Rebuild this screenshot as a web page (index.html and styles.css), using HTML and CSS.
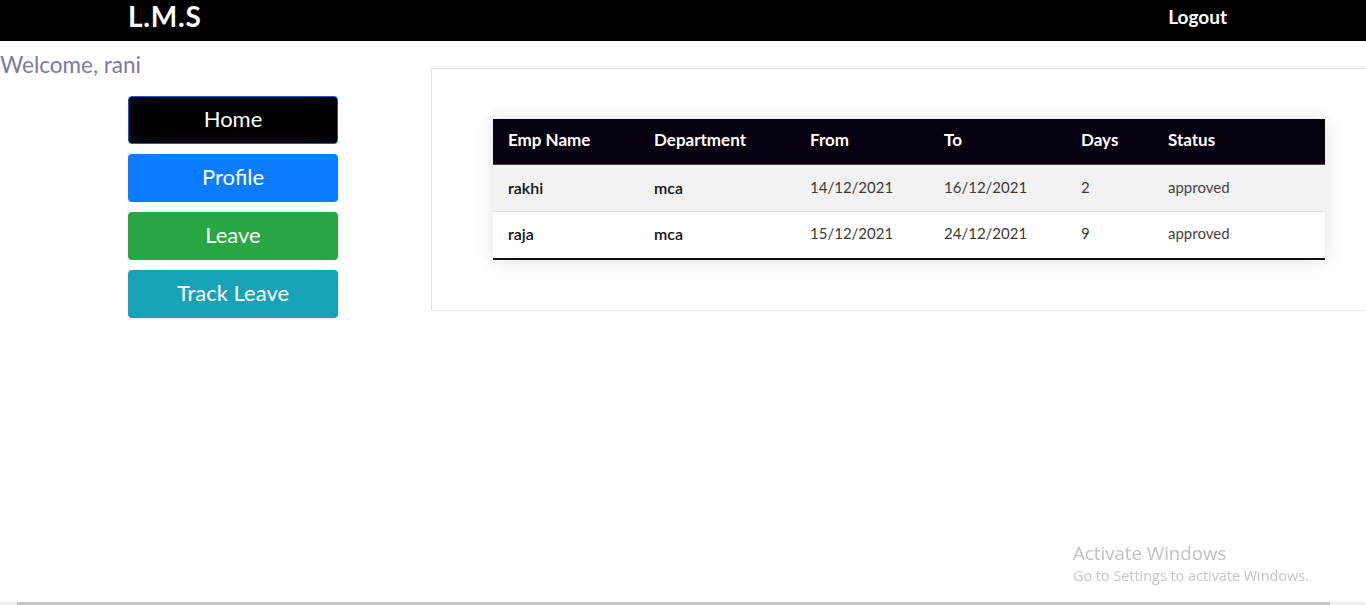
FILE: index.html
```html
<!DOCTYPE html>
<html lang="en">
<head>
<meta charset="utf-8">
<title>L.M.S</title>
<link rel="stylesheet" href="styles.css">
</head>
<body>
<header class="topbar">
  <div class="brand">L.M.S</div>
  <a class="logout" href="#">Logout</a>
</header>
<div class="layout">
  <aside class="side">
    <div class="welcome">Welcome, rani</div>
    <nav class="menu">
      <a class="btn btn-home" href="#">Home</a>
      <a class="btn btn-profile" href="#">Profile</a>
      <a class="btn btn-leave" href="#">Leave</a>
      <a class="btn btn-track" href="#">Track Leave</a>
    </nav>
  </aside>
  <main class="panel">
    <table class="leaves">
      <thead>
        <tr><th>Emp Name</th><th>Department</th><th>From</th><th>To</th><th>Days</th><th>Status</th></tr>
      </thead>
      <tbody>
        <tr class="alt"><td class="strong">rakhi</td><td class="strong">mca</td><td>14/12/2021</td><td>16/12/2021</td><td>2</td><td class="light">approved</td></tr>
        <tr class="last"><td class="strong">raja</td><td class="strong">mca</td><td>15/12/2021</td><td>24/12/2021</td><td>9</td><td class="light">approved</td></tr>
      </tbody>
    </table>
  </main>
</div>
<div class="watermark">
  <div class="wm-title">Activate Windows</div>
  <div class="wm-sub">Go to Settings to activate Windows.</div>
</div>
<div class="hscroll"><div class="thumb"></div></div>
</body>
</html>
```
FILE: styles.css
```css
html, body {
  margin: 0;
  padding: 0;
  overflow: hidden;
  height: 605px;
  background: #fff;
  font-family: Lato, "Open Sans", sans-serif;
}
.topbar {
  height: 41px;
  background: #000;
  display: flex;
  align-items: center;
  justify-content: space-between;
  padding: 0 139px 0 128px;
}
.brand {
  color: #fff;
  font-size: 28px;
  font-weight: 700;
  letter-spacing: 0.8px;
  margin-top: -10px;
}
.logout {
  color: #fff;
  text-decoration: none;
  font-weight: 700;
  font-size: 19px;
  margin-top: -8px;
}
.layout {
  display: flex;
  align-items: flex-start;
}
.side {
  width: 431px;
  flex: none;
}
.welcome {
  margin-top: 12px;
  line-height: 24px;
  font-size: 22.5px;
  color: #7a78ad;
}
.menu {
  margin: 19px 0 0 128px;
  width: 210px;
  display: flex;
  flex-direction: column;
  gap: 10px;
}
.btn {
  display: block;
  height: 48px;
  line-height: 44px;
  box-sizing: border-box;
  border-radius: 4px;
  border: 1px solid transparent;
  text-align: center;
  color: #fff;
  text-decoration: none;
  font-size: 22px;
}
.btn-home { background: #000; border-color: #1a5fc8; }
.btn-profile { background: #0a7cff; }
.btn-leave { background: #29a745; }
.btn-track { background: #18a2b8; }
.panel {
  margin-top: 27px;
  width: 956px;
  flex: none;
  box-sizing: border-box;
  border: 1px solid #f0dde1;
  padding: 50px 62px 50px 61px;
}
.leaves {
  width: 832px;
  border-collapse: collapse;
  box-shadow: 0 0 18px rgba(0, 0, 0, 0.12);
  border-bottom: 2px solid #111;
}
.leaves th {
  background: #07000f;
  color: #fff;
  text-align: left;
  font-weight: 700;
  font-size: 17px;
  height: 41px;
  padding: 0 0 4px 15px;
  border-bottom: 1px solid #444;
}
.leaves td {
  height: 44px;
  padding: 0 0 2px 15px;
  font-size: 15px;
  color: #3a3a3a;
  border-top: 1px solid #e6e6e6;
}
.leaves tr.last td { height: 42px; padding-bottom: 4px; }
.leaves tr.alt td { background: #f2f2f2; }
.leaves td.strong { color: #111; font-weight: 600; font-size: 16px; }
.leaves td.light { color: #444; }
.leaves th:nth-child(1) { width: 131px; }
.leaves th:nth-child(2) { width: 141px; }
.leaves th:nth-child(3) { width: 119px; }
.leaves th:nth-child(4) { width: 122px; }
.leaves th:nth-child(5) { width: 72px; }
.watermark {
  position: fixed;
  left: 1073px;
  top: 541px;
  color: #c2c2c2;
  font-family: "Open Sans", sans-serif;
}
.wm-title { font-size: 18.7px; line-height: 23px; }
.wm-sub { font-size: 14.4px; line-height: 23px; color: #c6c6c6; }
.hscroll {
  position: fixed;
  left: 0;
  right: 0;
  bottom: 0;
  height: 3px;
  background: #f0f0f0;
}
.thumb {
  margin-left: 17px;
  width: 1313px;
  height: 3px;
  background: #c4c4c4;
}
```
